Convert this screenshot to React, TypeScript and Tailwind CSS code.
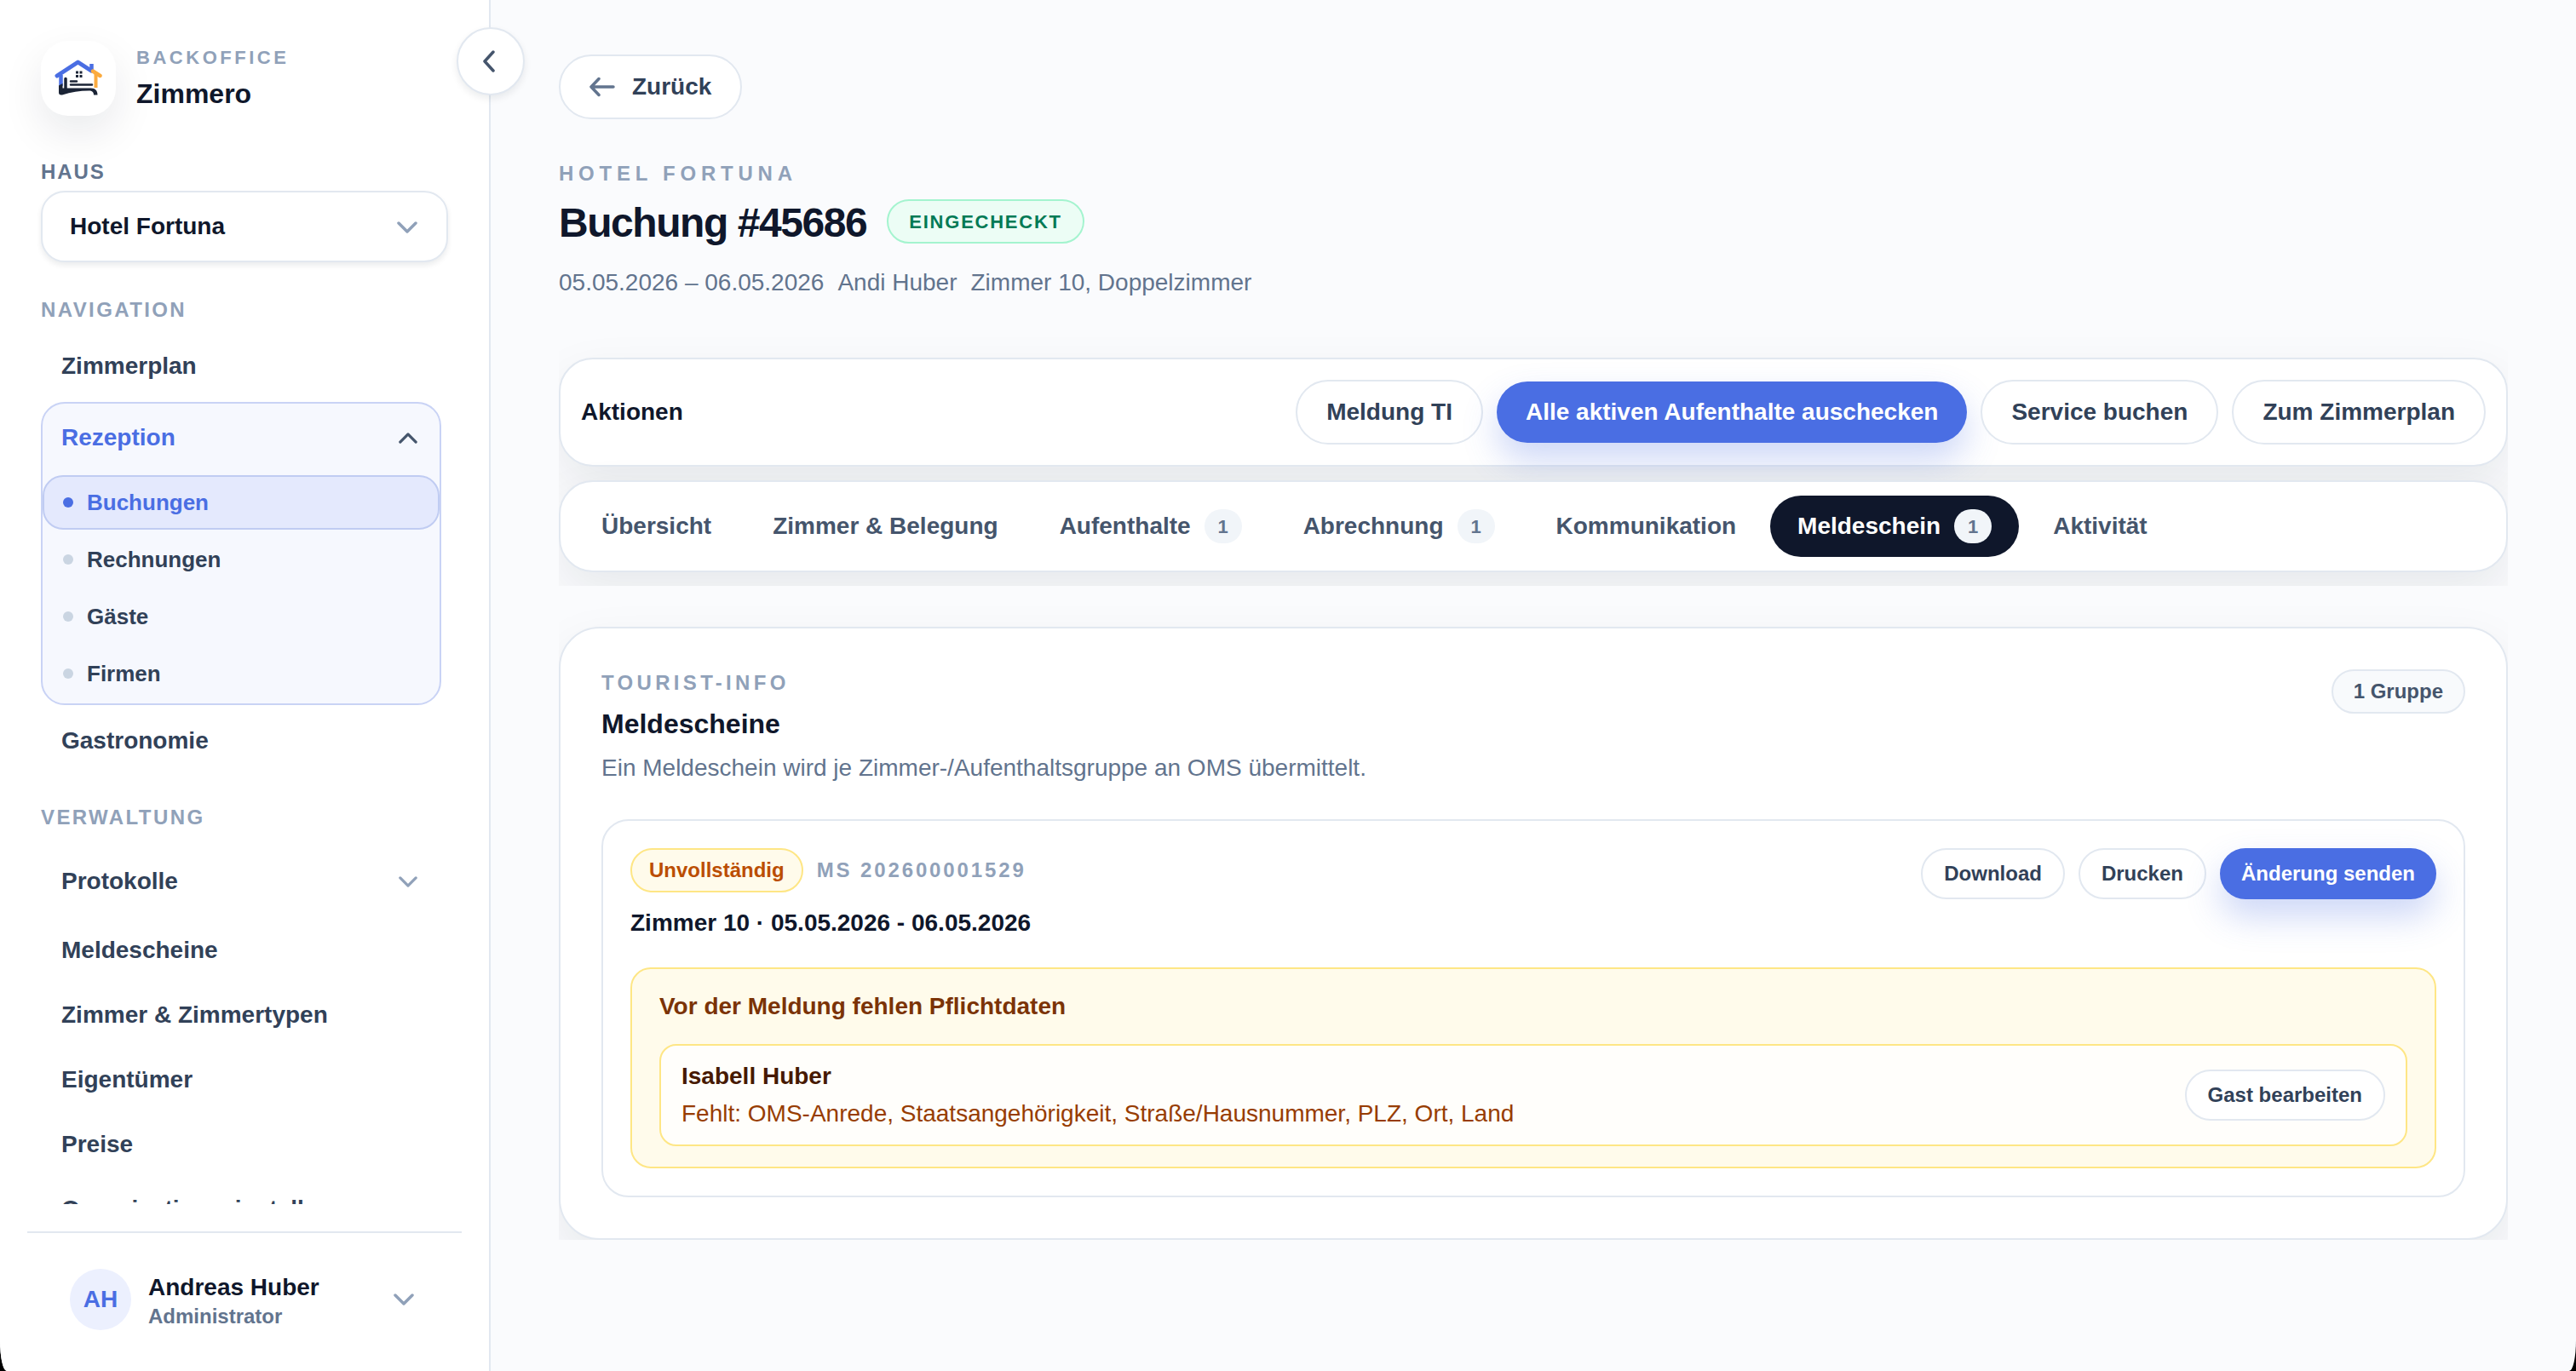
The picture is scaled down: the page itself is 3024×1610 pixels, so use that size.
import { useState } from 'react';

interface NavItem {
  label: string;
}

interface Tab {
  id: string;
  label: string;
  count?: number;
}

const receptionItems = ['Buchungen', 'Rechnungen', 'Gäste', 'Firmen'];

const adminItems: NavItem[] = [
  { label: 'Meldescheine' },
  { label: 'Zimmer & Zimmertypen' },
  { label: 'Eigentümer' },
  { label: 'Preise' },
  { label: 'Organisationseinstellungen' },
];

const tabs: Tab[] = [
  { id: 'overview', label: 'Übersicht' },
  { id: 'rooms', label: 'Zimmer & Belegung' },
  { id: 'stays', label: 'Aufenthalte', count: 1 },
  { id: 'billing', label: 'Abrechnung', count: 1 },
  { id: 'communication', label: 'Kommunikation' },
  { id: 'registration', label: 'Meldeschein', count: 1 },
  { id: 'activity', label: 'Aktivität' },
];

const outlineButton =
  'rounded-full border-2 border-slate-200 bg-white font-bold text-slate-700 hover:bg-slate-50';
const primaryButton =
  'rounded-full bg-[#4a6ee3] font-bold text-white shadow-[0_20px_40px_rgba(74,110,227,0.28)] hover:bg-[#3f61d2]';
const cardShadow = 'shadow-[0_24px_60px_rgba(15,23,42,0.08)]';

function Logo() {
  return (
    <svg viewBox="0 0 56 44" className="h-11 w-14" fill="none" aria-hidden="true">
      <path d="M7.500 18v13" stroke="#4a6ee3" strokeWidth="4.500" />
      <path
        d="M3 19L27.500 3 43 13"
        stroke="#4a6ee3"
        strokeWidth="5"
        strokeLinecap="round"
        strokeLinejoin="round"
      />
      <path d="M43.500 5v9" stroke="#4a6ee3" strokeWidth="4.500" />
      <path d="M45 13.500l8.500 5.500" stroke="#fbab3f" strokeWidth="4.500" strokeLinecap="round" />
      <path d="M48.500 17v16" stroke="#fbab3f" strokeWidth="4" />
      <path
        d="M25 13.500h3v3h-3zM29.500 13.500h3v3h-3zM25 18h3v3h-3zM29.500 18h3v3h-3z"
        fill="#1b2436"
      />
      <path d="M13 22.500v12" stroke="#1b2436" strokeWidth="3.500" strokeLinecap="round" />
      <path d="M19 25.500h7M19 29.500h25" stroke="#1b2436" strokeWidth="2.500" strokeLinecap="round" />
      <path
        d="M5 30.500l4.500-2.500v5.500h33c5.500 0 8 3 8 8h-4.500c0-3.500-2-5-5.500-5-11 0-21 1.500-31.500 5-3 .5-4-1-4-3z"
        fill="#1b2436"
      />
    </svg>
  );
}

function Chevron({ className, up = false }: { className: string; up?: boolean }) {
  return (
    <svg
      viewBox="0 0 24 14"
      className={`shrink-0 ${className}`}
      fill="none"
      stroke="currentColor"
      strokeWidth="3.500"
      strokeLinecap="round"
      strokeLinejoin="round"
      aria-hidden="true"
    >
      <path d={up ? 'M2 12L12 2l10 10' : 'M2 2l10 10L22 2'} />
    </svg>
  );
}

function NavLink({ label }: NavItem) {
  return (
    <a href="#" className="flex h-[76px] shrink-0 items-center px-6 text-[28px] font-bold text-slate-700">
      {label}
    </a>
  );
}

function Sidebar() {
  const [open, setOpen] = useState(true);

  return (
    <aside className="relative flex w-[576px] shrink-0 flex-col border-r-2 border-slate-200 bg-white">
      <button
        aria-label="Navigation einklappen"
        className="absolute top-8 -right-[42px] z-10 flex size-20 items-center justify-center rounded-full border-2 border-slate-200 bg-white pr-1 text-slate-600 shadow-[0_4px_8px_rgba(15,23,42,0.08)]"
      >
        <svg
          viewBox="0 0 14 26"
          className="h-[26px] w-[14px]"
          fill="none"
          stroke="currentColor"
          strokeWidth="3.500"
          strokeLinecap="round"
          strokeLinejoin="round"
        >
          <path d="M12 2L2 13l10 11" />
        </svg>
      </button>

      {/* Brand */}
      <div className="flex items-center gap-6 px-12 pt-12">
        <div className="flex size-[88px] items-center justify-center rounded-[32px] bg-white shadow-[0_20px_50px_rgba(15,23,42,0.09)]">
          <Logo />
        </div>
        <div className="flex flex-col">
          <span className="text-[22px] leading-9 font-bold tracking-[0.16em] text-slate-400">BACKOFFICE</span>
          <span className="text-[32px] leading-[48px] font-bold text-slate-900">Zimmero</span>
        </div>
      </div>

      {/* House picker */}
      <div className="px-12 pt-[50px]">
        <label htmlFor="house" className="block text-2xl font-bold tracking-[0.08em] text-slate-500">
          HAUS
        </label>
        <div className="relative mt-1.5">
          <select
            id="house"
            className="h-[84px] w-full appearance-none rounded-[28px] border-2 border-slate-200 bg-white px-8 text-[28px] font-bold text-slate-900 shadow-[0_4px_6px_rgba(15,23,42,0.08)]"
          >
            <option>Hotel Fortuna</option>
          </select>
          <Chevron className="pointer-events-none absolute top-9 right-9 h-[14px] w-6 text-slate-400" />
        </div>
      </div>

      <nav className="mt-10 flex min-h-0 flex-1 flex-col overflow-hidden pr-14 pl-12">
        <h2 className="shrink-0 text-2xl leading-8 font-bold tracking-[0.1em] text-slate-400">NAVIGATION</h2>
        <div className="mt-3 flex shrink-0 flex-col">
          <NavLink label="Zimmerplan" />
          <div className="my-1 flex shrink-0 flex-col rounded-[28px] border-2 border-[#c9d3f5] bg-[#f6f8fe]">
            <button
              onClick={() => setOpen(!open)}
              aria-expanded={open}
              className="flex h-[84px] items-center justify-between pr-[26px] pb-1 pl-[22px] text-[28px] font-bold text-[#4a6ee3]"
            >
              Rezeption
              <Chevron up={open} className="h-[13px] w-[22px] text-slate-600" />
            </button>
            {open && (
              <div className="flex flex-col gap-[3px] pb-[3px]">
                {receptionItems.map((item) => {
                  const active = item === 'Buchungen';
                  return (
                    <a
                      key={item}
                      href="#"
                      className={`flex h-16 items-center gap-4 rounded-[24px] border-2 px-[22px] text-[26px] font-bold ${
                        active
                          ? 'border-[#c0ccf2] bg-[#e4e9fd] text-[#4a6ee3]'
                          : 'border-transparent text-slate-700'
                      }`}
                    >
                      <span className={`size-3 rounded-full ${active ? 'bg-[#4a6ee3]' : 'bg-slate-300'}`} />
                      {item}
                    </a>
                  );
                })}
              </div>
            )}
          </div>
          <NavLink label="Gastronomie" />
        </div>

        <h2 className="mt-9 shrink-0 text-2xl leading-8 font-bold tracking-[0.1em] text-slate-400">VERWALTUNG</h2>
        <div className="mt-4 flex min-h-0 flex-1 flex-col overflow-hidden">
          <button className="flex h-[86px] shrink-0 items-center justify-between pr-7 pl-6 text-[28px] font-bold text-slate-700">
            Protokolle
            <Chevron className="h-[13px] w-[22px] text-slate-400" />
          </button>
          {adminItems.map((item) => (
            <NavLink key={item.label} label={item.label} />
          ))}
        </div>
      </nav>

      {/* Current user */}
      <div className="mx-8 mt-8 shrink-0 border-t-2 border-slate-200">
        <button className="flex w-full items-center gap-5 pt-[42px] pr-14 pb-12 pl-[50px] text-left">
          <span className="flex size-[72px] items-center justify-center rounded-full bg-[#ecf0fe] text-[28px] font-bold text-[#4a6ee3]">
            AH
          </span>
          <span className="flex flex-1 flex-col pt-1">
            <span className="text-[28px] leading-9 font-bold text-slate-900">Andreas Huber</span>
            <span className="text-2xl leading-8 font-bold text-slate-500">Administrator</span>
          </span>
          <Chevron className="h-[14px] w-6 text-slate-400" />
        </button>
      </div>
    </aside>
  );
}

function BookingHeader() {
  return (
    <header className="flex flex-col items-start">
      <button className={`flex h-[76px] items-center gap-5 px-[34px] text-[28px] ${outlineButton}`}>
        <svg
          viewBox="0 0 30 24"
          className="h-6 w-[30px] text-slate-500"
          fill="none"
          stroke="currentColor"
          strokeWidth="3.500"
          strokeLinecap="round"
          strokeLinejoin="round"
          aria-hidden="true"
        >
          <path d="M28 12H2M11 2.500L2 12l9 9.500" />
        </svg>
        Zurück
      </button>
      <p className="mt-12 text-2xl leading-8 font-bold tracking-[0.24em] text-slate-400">HOTEL FORTUNA</p>
      <div className="mt-2 flex items-center gap-6">
        <h1 className="pt-1 text-5xl leading-[60px] font-bold tracking-[-0.03em] text-slate-900">Buchung #45686</h1>
        <span className="flex h-[52px] items-center rounded-full border-2 border-emerald-200 bg-emerald-50 px-6 text-[22px] font-bold tracking-[0.08em] text-emerald-700">
          EINGECHECKT
        </span>
      </div>
      <p className="mt-5 flex flex-wrap gap-4 text-[28px] leading-10 text-slate-500">
        <span>05.05.2026 – 06.05.2026</span>
        <span>Andi Huber</span>
        <span>Zimmer 10, Doppelzimmer</span>
      </p>
    </header>
  );
}

function TabBar() {
  const [activeTab, setActiveTab] = useState('registration');

  return (
    <div
      role="tablist"
      className={`flex flex-wrap gap-2 rounded-[40px] border-2 border-slate-200 bg-white p-4 ${cardShadow}`}
    >
      {tabs.map((tab) => (
        <button
          key={tab.id}
          role="tab"
          aria-selected={activeTab === tab.id}
          onClick={() => setActiveTab(tab.id)}
          className={`flex h-[72px] items-center gap-4 rounded-full px-8 text-[28px] font-bold ${
            activeTab === tab.id ? 'bg-slate-900 text-white' : 'text-slate-600'
          }`}
        >
          {tab.label}
          {tab.count && (
            <span className="flex h-10 w-11 items-center justify-center rounded-full bg-slate-100 text-[22px] text-slate-500">
              {tab.count}
            </span>
          )}
        </button>
      ))}
    </div>
  );
}

function RegistrationGroup() {
  return (
    <article className="mt-10 rounded-[32px] border-2 border-slate-200 p-8">
      <div className="flex items-start justify-between">
        <div>
          <div className="flex items-center gap-4">
            <span className="flex h-[52px] items-center rounded-full border-2 border-amber-200 bg-amber-50 px-5 text-2xl font-bold text-amber-700">
              Unvollständig
            </span>
            <span className="text-2xl font-bold tracking-[0.12em] text-slate-400">MS 202600001529</span>
          </div>
          <h3 className="mt-4 text-[28px] leading-10 font-bold text-slate-900">
            Zimmer 10 · 05.05.2026 - 06.05.2026
          </h3>
        </div>
        <div className="flex gap-4">
          <button className={`h-[60px] px-[25px] text-2xl ${outlineButton}`}>Download</button>
          <button className={`h-[60px] px-[25px] text-2xl ${outlineButton}`}>Drucken</button>
          <button className={`h-[60px] px-[25px] text-2xl ${primaryButton}`}>Änderung senden</button>
        </div>
      </div>

      <div className="mt-8 rounded-[24px] border-2 border-amber-200 bg-amber-50 px-8 py-6">
        <h4 className="text-[28px] leading-10 font-bold text-amber-900">Vor der Meldung fehlen Pflichtdaten</h4>
        <div className="mt-6 flex items-center justify-between rounded-[20px] border-2 border-amber-200 bg-white/80 px-6 py-[14px]">
          <div className="text-[28px] leading-[44px]">
            <p className="font-bold text-amber-950">Isabell Huber</p>
            <p className="text-amber-800">
              Fehlt: OMS-Anrede, Staatsangehörigkeit, Straße/Hausnummer, PLZ, Ort, Land
            </p>
          </div>
          <button className={`h-[60px] px-[25px] text-2xl ${outlineButton}`}>Gast bearbeiten</button>
        </div>
      </div>
    </article>
  );
}

export default function App() {
  return (
    <div className="bg-black font-['Liberation_Sans',Arial,sans-serif]">
      <div className="flex h-screen overflow-hidden rounded-br-[8px_36px] rounded-bl-[8px_36px] bg-[#fafbfd]">
        <Sidebar />

        <main className="min-w-0 flex-1 px-20 pt-16">
          <BookingHeader />

          {/* Actions and tabs */}
          <div className="mt-8 flex flex-col gap-4 overflow-hidden pt-9 pb-4">
            <section
              className={`flex items-center justify-between rounded-[40px] border-2 border-slate-200 bg-white p-6 ${cardShadow}`}
            >
              <h2 className="text-[28px] font-bold text-slate-900">Aktionen</h2>
              <div className="flex items-center gap-4">
                <button className={`h-[76px] px-[34px] text-[28px] ${outlineButton}`}>Meldung TI</button>
                <button className={`h-[72px] px-[34px] text-[28px] ${primaryButton}`}>
                  Alle aktiven Aufenthalte auschecken
                </button>
                <button className={`h-[76px] px-[34px] text-[28px] ${outlineButton}`}>Service buchen</button>
                <button className={`h-[76px] px-[34px] text-[28px] ${outlineButton}`}>Zum Zimmerplan</button>
              </div>
            </section>
            <TabBar />
          </div>

          {/* Registration forms */}
          <div className="overflow-hidden pt-12">
            <section className={`rounded-[48px] border-2 border-slate-200 bg-white p-12 ${cardShadow}`}>
              <div className="flex items-start justify-between">
                <div>
                  <p className="text-2xl leading-8 font-bold tracking-[0.18em] text-slate-400">TOURIST-INFO</p>
                  <h2 className="mt-2 text-[32px] leading-[48px] font-bold text-slate-900">Meldescheine</h2>
                  <p className="mt-2 text-[28px] leading-10 text-slate-500">
                    Ein Meldeschein wird je Zimmer-/Aufenthaltsgruppe an OMS übermittelt.
                  </p>
                </div>
                <span className="flex h-[52px] items-center rounded-full border-2 border-slate-200 bg-slate-50 px-6 text-2xl font-bold text-slate-600">
                  1 Gruppe
                </span>
              </div>
              <RegistrationGroup />
            </section>
          </div>
        </main>
      </div>
    </div>
  );
}
